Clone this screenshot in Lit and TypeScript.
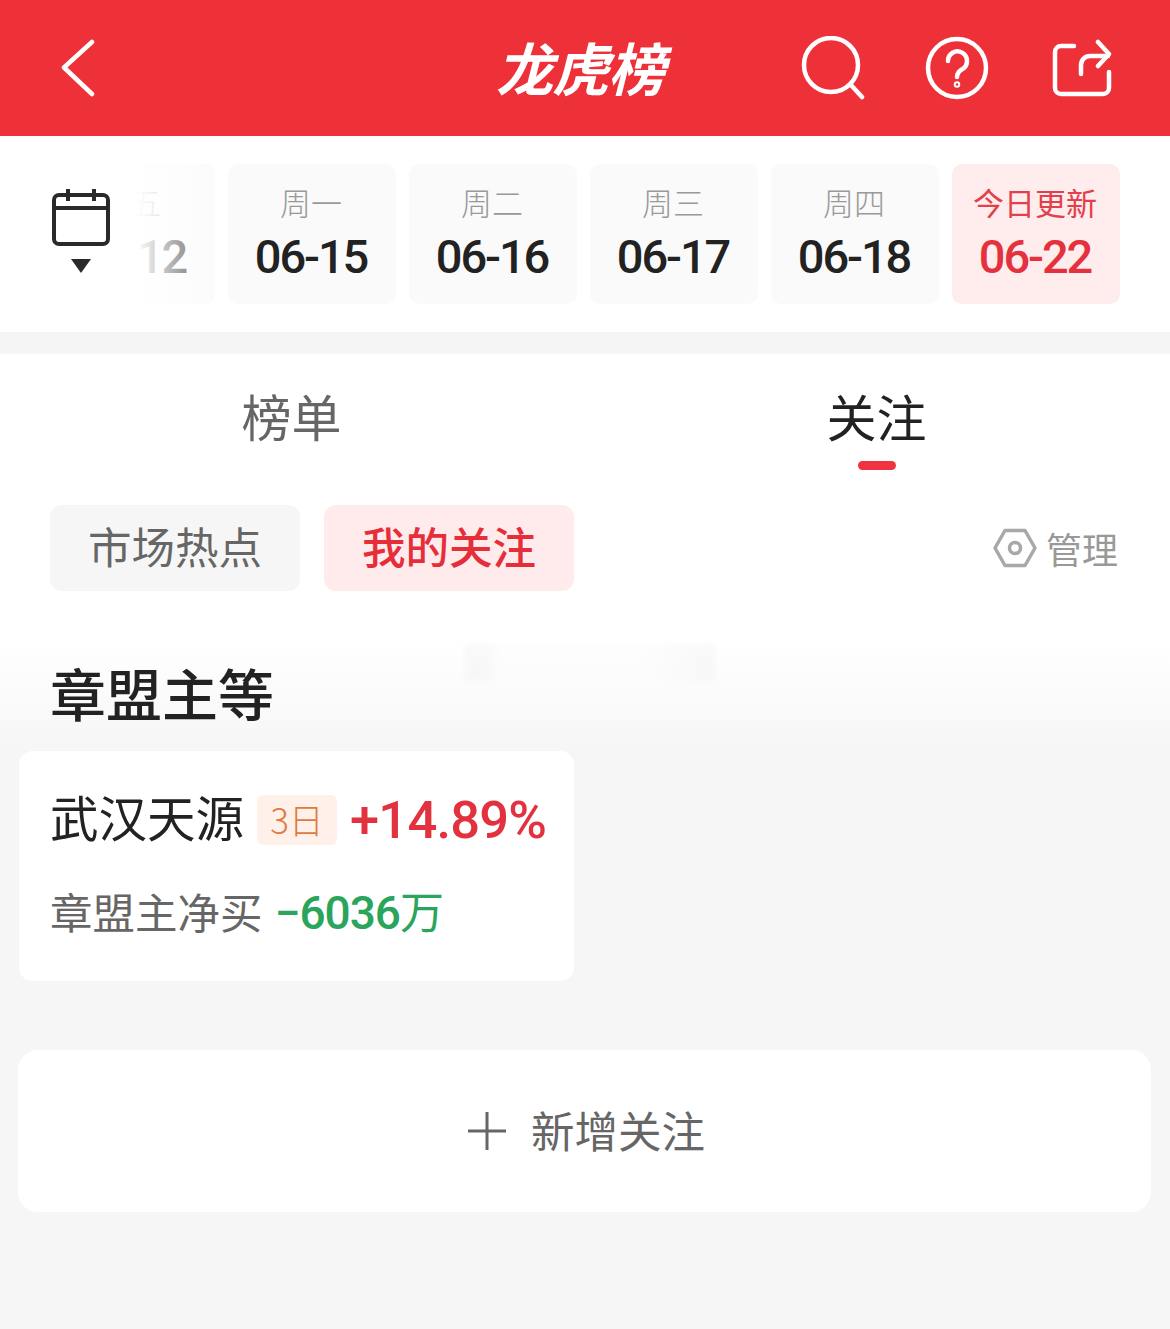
import { LitElement, css, html } from "lit";
import { customElement } from "lit/decorators.js";

const DAYS = [
  { label: "周五", date: "06-12" },
  { label: "周一", date: "06-15" },
  { label: "周二", date: "06-16" },
  { label: "周三", date: "06-17" },
  { label: "周四", date: "06-18" },
  { label: "今日更新", date: "06-22", active: true },
];

@customElement("app-root")
export class AppRoot extends LitElement {
  static styles = css`
    :host {
      display: block;
      width: 1170px;
      height: 1329px;
      overflow: hidden;
      background: #f6f6f6;
      font-family: "Noto Sans CJK SC", "Noto Sans", sans-serif;
      color: #222;
    }
    .top {
      height: 136px;
      background: #ee3138;
      display: grid;
      grid-template-columns: 1fr auto 1fr;
      align-items: center;
      color: #fff;
    }
    .top svg {
      display: block;
      fill: none;
      stroke: #fff;
      stroke-width: 4.5;
      stroke-linecap: round;
      stroke-linejoin: round;
    }
    .back {
      margin-left: 60px;
    }
    .title {
      font-size: 57px;
      font-weight: 700;
      font-style: italic;
      line-height: 1;
      letter-spacing: -1px;
      margin: -4px 10px 0 0;
    }
    .actions {
      display: flex;
      justify-content: flex-end;
      gap: 60px;
      padding-right: 58px;
      align-items: center;
    }
    .actions .share {
      margin-left: 3px;
    }
    .dates {
      height: 196px;
      background: #fff;
      display: flex;
      box-sizing: border-box;
      padding-top: 28px;
    }
    .cal {
      width: 136px;
      flex: none;
      display: flex;
      flex-direction: column;
      align-items: center;
      padding: 24px 0 0 26px;
      box-sizing: border-box;
      gap: 13px;
    }
    .cal svg {
      display: block;
    }
    .scroller {
      position: relative;
      flex: 1;
      overflow: hidden;
      display: flex;
      justify-content: flex-end;
      gap: 13px;
      padding-right: 50px;
      height: 141px;
    }
    .scroller::before {
      content: "";
      position: absolute;
      left: 0;
      top: 0;
      bottom: 0;
      width: 84px;
      background: linear-gradient(90deg, #fff 0%, rgba(255, 255, 255, 0.2) 100%);
    }
    .chip {
      flex: none;
      width: 168px;
      height: 140px;
      border-radius: 10px;
      background: #fafafa;
      display: flex;
      flex-direction: column;
      align-items: center;
    }
    .chip .label {
      font-size: 31px;
      line-height: 40px;
      margin-top: 18px;
      padding-right: 2px;
      color: #999;
      font-weight: 300;
    }
    .chip .date {
      font-family: Roboto, sans-serif;
      font-size: 47px;
      font-weight: 500;
      line-height: 54px;
      margin-top: 8px;
      padding-right: 2px;
      letter-spacing: -2.1px;
      color: #222;
    }
    .chip.active {
      background: #ffeced;
    }
    .chip.active .label {
      color: #e2404a;
      font-weight: 400;
    }
    .chip.active .date {
      color: #e3313d;
    }
    .divider {
      height: 22px;
      background: #f5f5f5;
    }
    .panel {
      background: linear-gradient(180deg, #fff 0, #fff 286px, #f6f6f6 400px);
      position: relative;
    }
    .tabs {
      display: grid;
      grid-template-columns: 583px 587px;
      height: 151px;
      box-sizing: border-box;
    }
    .tab {
      font-size: 50px;
      line-height: 64px;
      padding-top: 29px;
      color: #666;
      font-weight: 400;
      display: flex;
      flex-direction: column;
      align-items: center;
    }
    .tab.on {
      color: #222;
    }
    .tab.on::after {
      content: "";
      width: 38px;
      height: 9px;
      margin-top: 14px;
      border-radius: 5px;
      background: #ef3340;
    }
    .filters {
      display: flex;
      align-items: center;
      gap: 24px;
      padding: 0 52px 0 50px;
    }
    .seg {
      width: 250px;
      height: 86px;
      box-sizing: border-box;
      padding-bottom: 5px;
      border-radius: 12px;
      background: #f6f6f6;
      color: #666;
      font-size: 43.5px;
      font-weight: 400;
      display: flex;
      align-items: center;
      justify-content: center;
    }
    .seg.on {
      background: #ffebeb;
      color: #e62e3a;
      font-weight: 500;
    }
    .manage {
      margin-left: auto;
      display: flex;
      align-items: center;
      gap: 9px;
      font-size: 36px;
      font-weight: 400;
      color: #999;
    }
    .manage svg {
      display: block;
      fill: none;
      stroke: #a8a8a8;
      stroke-width: 3.5;
      stroke-linejoin: round;
    }
    .smudge {
      position: absolute;
      left: 465px;
      top: 290px;
      width: 250px;
      height: 38px;
      filter: blur(2px);
      background: linear-gradient(90deg, #f3f3f3 0, #f3f3f3 7%, #fcfcfc 14%, #fcfcfc 70%, #f3f3f3 100%);
      opacity: 0.45;
    }
    h2 {
      margin: 0;
      padding: 65px 0 0 50px;
      font-size: 56px;
      line-height: 72px;
      font-weight: 500;
    }
    .stock {
      margin: 23px 0 0 19px;
      width: 555px;
      height: 230px;
      box-sizing: border-box;
      padding: 43px 0 0 31px;
      background: #fff;
      border-radius: 14px;
    }
    .row {
      display: flex;
      align-items: center;
      height: 52px;
    }
    .name {
      font-size: 48.5px;
      font-weight: 400;
      color: #222;
      padding-bottom: 8px;
    }
    .tag {
      margin-left: 13px;
      width: 80px;
      height: 50px;
      box-sizing: border-box;
      padding-bottom: 4px;
      background: #fff0ea;
      border-radius: 6px;
      color: #e07a3e;
      font-size: 35px;
      font-weight: 300;
      display: flex;
      align-items: center;
      justify-content: center;
    }
    .pct {
      margin-left: 13px;
      font-family: Roboto, sans-serif;
      font-size: 52.500px;
      font-weight: 500;
      letter-spacing: -0.8px;
      color: #e3323f;
    }
    .net {
      display: flex;
      align-items: center;
      margin-top: 38px;
      font-size: 42.500px;
      height: 52px;
      font-weight: 400;
      color: #666;
    }
    .amount {
      margin-left: 12px;
      display: flex;
      align-items: center;
      font-size: 44px;
      color: #2ba45c;
    }
    .amount b {
      font-family: Roboto, sans-serif;
      font-size: 46px;
      font-weight: 500;
      letter-spacing: -1px;
      margin-top: 6px;
    }
    .add {
      margin: 69px 19px 0 18px;
      height: 162px;
      border-radius: 20px;
      background: #fff;
      display: flex;
      align-items: center;
      justify-content: center;
      gap: 24px;
      font-size: 43.500px;
      font-weight: 400;
      color: #666;
      padding-left: 4px;
    }
    .add span {
      padding-bottom: 4px;
      margin-left: 1px;
    }
    .add svg {
      display: block;
      stroke: #666;
      stroke-width: 3;
    }
  `;

  render() {
    return html`
      <div class="top">
        <svg class="back" width="36" height="58" viewBox="0 0 36 58">
          <path d="M32 3 L4 28.5 L32 55" />
        </svg>
        <div class="title">龙虎榜</div>
        <div class="actions">
          <svg width="64" height="64" viewBox="0 0 64 64">
            <circle cx="30" cy="29" r="27" />
            <path d="M50 49 L61 61" />
          </svg>
          <svg width="64" height="64" viewBox="0 0 64 64">
            <circle cx="32" cy="32" r="29" />
            <path d="M23 25 a9.500 9.500 0 1 1 14.500 8 q-5.500 3 -5.500 8" />
            <circle cx="32" cy="48.500" r="1" />
          </svg>
          <svg class="share" width="60" height="60" viewBox="0 0 60 60">
            <path d="M22 8 H9 a6 6 0 0 0 -6 6 V50 a6 6 0 0 0 6 6 H51 a6 6 0 0 0 6 -6 V34" />
            <path d="M29 36 V27 a9 9 0 0 1 9 -9 H56" />
            <path d="M46 4 L57 16 L46 28" />
          </svg>
        </div>
      </div>
      <div class="dates">
        <div class="cal">
          <svg width="60" height="58" viewBox="0 0 60 58" fill="none" stroke="#2a2a2a" stroke-width="4">
            <rect x="3" y="7" width="54" height="49" rx="5" />
            <path d="M3 20 H57 M17 1 V13 M43 1 V13" />
          </svg>
          <svg width="20" height="14" viewBox="0 0 20 14">
            <path d="M0 0 H20 L10 14 Z" fill="#2a2a2a" />
          </svg>
        </div>
        <div class="scroller">
          ${DAYS.map(
            (d) => html`
              <div class="chip ${d.active ? "active" : ""}">
                <div class="label">${d.label}</div>
                <div class="date">${d.date}</div>
              </div>
            `
          )}
        </div>
      </div>
      <div class="divider"></div>
      <div class="panel">
        <div class="tabs">
          <div class="tab">榜单</div>
          <div class="tab on">关注</div>
        </div>
        <div class="filters">
          <div class="seg">市场热点</div>
          <div class="seg on">我的关注</div>
          <div class="manage">
            <svg width="44" height="40" viewBox="0 0 44 40">
              <path d="M12 2.500 H32 L42 20 L32 37.500 H12 L2 20 Z" />
              <circle cx="22" cy="20" r="5.500" />
            </svg>
            管理
          </div>
        </div>
        <div class="smudge"></div>
        <h2>章盟主等</h2>
        <div class="stock">
          <div class="row">
            <span class="name">武汉天源</span>
            <span class="tag">3日</span>
            <span class="pct">+14.89%</span>
          </div>
          <div class="net">
            章盟主净买
            <span class="amount"><b>−6036</b>万</span>
          </div>
        </div>
        <div class="add">
          <svg width="38" height="38" viewBox="0 0 38 38">
            <path d="M0 19 H38 M19 0 V38" />
          </svg>
          <span>新增关注</span>
        </div>
      </div>
    `;
  }
}
